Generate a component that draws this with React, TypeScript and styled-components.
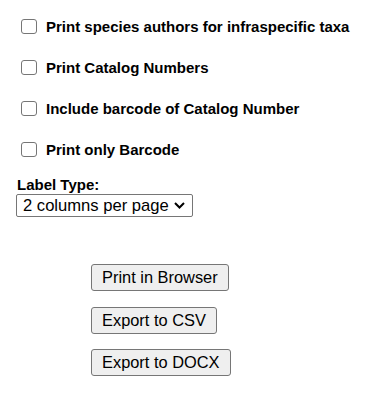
import { createGlobalStyle, styled } from "styled-components";

const GlobalStyle = createGlobalStyle`
  body {
    margin: 0;
    background: #fff;
    font-family: "Liberation Sans", Arial, sans-serif;
    color: #000;
  }
`;

const Page = styled.form`
  padding: 16px 16px 0 16px;
  display: flex;
  flex-direction: column;
`;

const OptionList = styled.div`
  display: flex;
  flex-direction: column;
  gap: 20px;
  padding-left: 5px;
`;

const OptionRow = styled.label`
  display: flex;
  align-items: center;
  gap: 9px;
  height: 21px;
  font-size: 15px;
  font-weight: 700;
`;

const Check = styled.input`
  appearance: none;
  margin: 0;
  width: 16px;
  height: 15px;
  border: 1px solid #767676;
  border-radius: 3px;
  background: #fff;
`;

const LabelType = styled.div`
  margin-top: 16px;
  display: flex;
  flex-direction: column;
  align-items: flex-start;
  gap: 1px;
`;

const FieldTitle = styled.div`
  font-size: 15px;
  font-weight: 700;
  line-height: 17px;
  padding-left: 1px;
`;

const SelectBox = styled.div`
  display: flex;
  align-items: center;
  gap: 5px;
  height: 23px;
  box-sizing: border-box;
  border: 1px solid #767676;
  border-radius: 2px;
  padding: 0 7px 0 6px;
  font-size: 16.6px;
`;

const ButtonStack = styled.div`
  margin-top: 47px;
  padding-left: 75px;
  display: flex;
  flex-direction: column;
  align-items: flex-start;
  gap: 15.5px;
`;

const Button = styled.button`
  font-family: "Liberation Sans", Arial, sans-serif;
  font-size: 16.4px;
  height: 27px;
  padding: 0 10px;
  background: #efefef;
  color: #000;
  border: 1px solid #767676;
  border-radius: 3px;
`;

const options = [
  "Print species authors for infraspecific taxa",
  "Print Catalog Numbers",
  "Include barcode of Catalog Number",
  "Print only Barcode",
];

function Chevron() {
  return (
    <svg width="11" height="7" viewBox="0 0 11 7">
      <path d="M1 1l4.5 4.5L10 1" fill="none" stroke="#000" strokeWidth="2" />
    </svg>
  );
}

export default function App() {
  return (
    <>
      <GlobalStyle />
      <Page>
        <OptionList>
          {options.map((o) => (
            <OptionRow key={o}>
              <Check type="checkbox" />
              {o}
            </OptionRow>
          ))}
        </OptionList>
        <LabelType>
          <FieldTitle>Label Type:</FieldTitle>
          <SelectBox>
            2 columns per page
            <Chevron />
          </SelectBox>
        </LabelType>
        <ButtonStack>
          <Button type="button">Print in Browser</Button>
          <Button type="button">Export to CSV</Button>
          <Button type="button">Export to DOCX</Button>
        </ButtonStack>
      </Page>
    </>
  );
}
